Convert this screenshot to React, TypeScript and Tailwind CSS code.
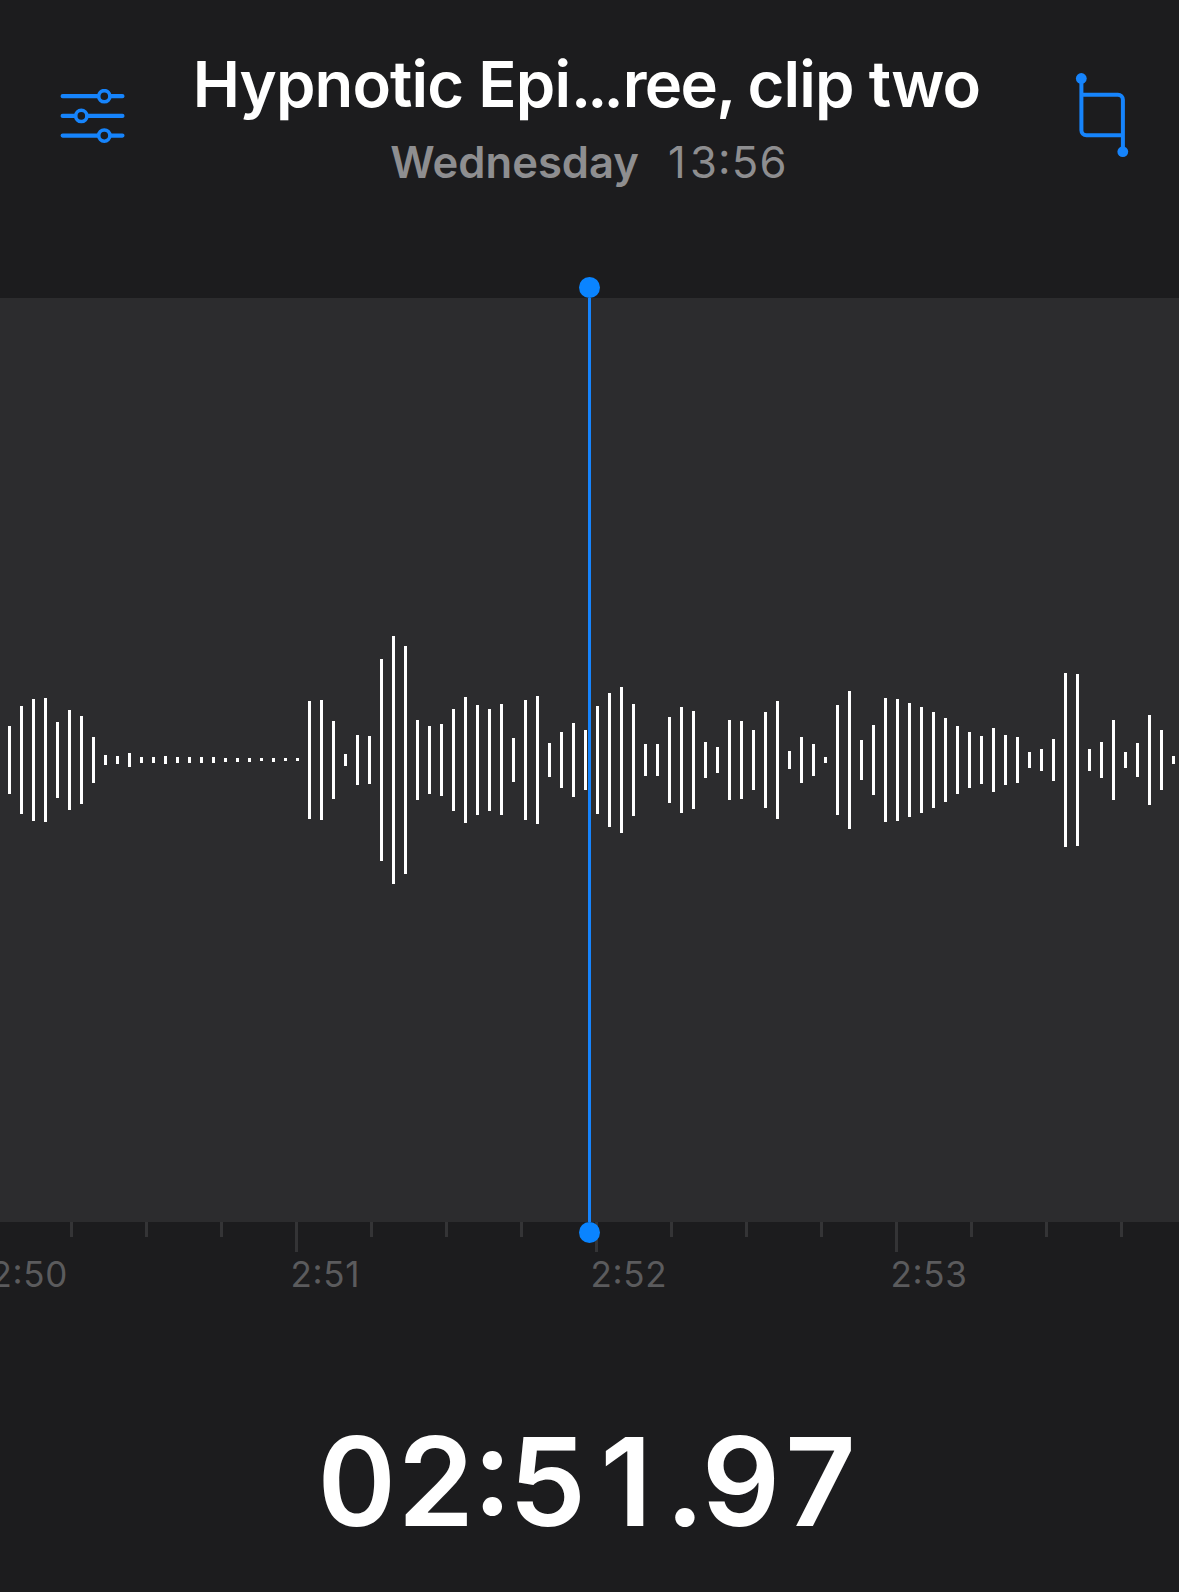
const PANEL_CENTER = 462;
const BAR_STEP = 12;
const TICK_STEP = 75;

const levels = [
  68, 108, 122, 124, 76, 100, 88, 46, 10, 8, 14, 6, 6, 8, 6, 6, 6, 6, 4, 4, 4, 3, 4, 3, 3,
  118, 120, 78, 12, 50, 48, 202, 248, 228, 80, 68, 72, 102, 126, 110, 102, 111, 44, 120, 128, 34, 56, 74, 60, 108,
  134, 146, 112, 32, 32, 86, 106, 98, 36, 26, 80, 78, 60, 96, 118, 18, 46, 32, 6, 110, 138, 40, 70, 124,
  122, 114, 106, 96, 84, 68, 56, 48, 64, 50, 46, 16, 22, 42, 174, 172, 22, 36, 80, 16, 34, 90, 60, 8,
];

const seconds = ["2:50", "2:51", "2:52", "2:53"];

function SlidersIcon() {
  return (
    <svg width="68" height="54" viewBox="0 0 68 54" fill="none" stroke="#1684fc" strokeLinecap="round">
      <path d="M3.7 7.2H63.4M3.7 26.9H63.4M3.7 46.6H63.4" strokeWidth="4.3" />
      <g fill="#1c1c1e" strokeWidth="3.6">
        <circle cx="45.3" cy="7.2" r="5.6" />
        <circle cx="22.3" cy="26.9" r="5.6" />
        <circle cx="45.3" cy="46.6" r="5.6" />
      </g>
    </svg>
  );
}

function TrimIcon() {
  return (
    <svg width="54" height="86" viewBox="0 0 54 86" fill="none" stroke="#1684fc" strokeWidth="4">
      <path d="M6.4 6.5V58.2a5 5 0 0 0 5 5H47.9M47.9 79.7V27.7a5 5 0 0 0 -5 -5H6.4" />
      <g fill="#1684fc" stroke="none">
        <circle cx="6.3" cy="6.5" r="5.4" />
        <circle cx="47.8" cy="79.7" r="5.4" />
      </g>
    </svg>
  );
}

function Header() {
  return (
    <header className="grid h-[298px] shrink-0 grid-cols-[68px_1fr_54px] items-start pl-[59px] pr-[50px]">
      <button aria-label="Options" className="mt-[89px] w-[68px]">
        <SlidersIcon />
      </button>
      <div className="flex flex-col items-center whitespace-nowrap pr-[29px] pt-[44px]">
        <h1 className="text-[63.3px] font-semibold leading-[80px] tracking-[-0.87px] text-white">
          Hypnotic Epi<span className="ml-px mr-[3px] tracking-[-4px]">...</span>
          <span className="tracking-[-1.7px]">ree, </span>clip two
        </h1>
        <p className="ml-[5px] mt-[7px] flex gap-[29px] text-[43.6px] leading-[64px] text-[#8e8e90]">
          <span className="font-semibold">Wednesday</span>
          <span className="tracking-[1.2px]">
            <span className="mr-[3px]">1</span>3:56
          </span>
        </p>
      </div>
      <button aria-label="Trim" className="mt-[72px] w-[54px]">
        <TrimIcon />
      </button>
    </header>
  );
}

function Waveform() {
  return (
    <section className="relative h-[924px] shrink-0 bg-[#2c2c2e]">
      <svg className="block" width="1179" height="924" fill="#ffffff" shapeRendering="crispEdges">
        {levels.map((h, i) => (
          <rect key={i} x={8 + i * BAR_STEP} y={PANEL_CENTER - Math.ceil(h / 2)} width="3" height={h} />
        ))}
      </svg>
      <div className="absolute -top-[21px] left-[579px] z-10 flex h-[966px] w-[21px] flex-col items-center">
        <span className="size-[21px] rounded-full bg-[#0a84ff]" />
        <span className="w-[3px] flex-1 bg-[#1684fc]" />
        <span className="size-[21px] rounded-full bg-[#0a84ff]" />
      </div>
    </section>
  );
}

function Ruler() {
  return (
    <section className="h-[140px] shrink-0 overflow-hidden">
      <svg className="block" width="1179" height="30" fill="#343436" shapeRendering="crispEdges">
        {Array.from({ length: 15 }, (_, i) => (
          <rect key={i} x={70 + i * TICK_STEP} y="0" width="3" height={i % 4 === 3 ? 30 : 15} />
        ))}
      </svg>
      <div className="-ml-[9.5px] flex text-[35px] leading-[44px] tracking-[0.7px] text-[#5b5b5d]">
        {seconds.map((s) => (
          <span key={s} className="w-[300px] shrink-0">
            {s}
          </span>
        ))}
      </div>
    </section>
  );
}

export default function App() {
  return (
    <main className="flex h-[1592px] w-[1179px] flex-col overflow-hidden bg-[#1c1c1e] font-['Inter',sans-serif] [font-feature-settings:'calt']">
      <Header />
      <Waveform />
      <Ruler />
      <div className="flex h-[230px] items-center justify-center pr-[2px] pt-[11px]">
        <p className="whitespace-nowrap text-[122.8px] font-semibold leading-none tabular-nums text-white">
          02:5<span className="inline-block w-[80px] pl-[12px] proportional-nums">1</span>.97
        </p>
      </div>
    </main>
  );
}
